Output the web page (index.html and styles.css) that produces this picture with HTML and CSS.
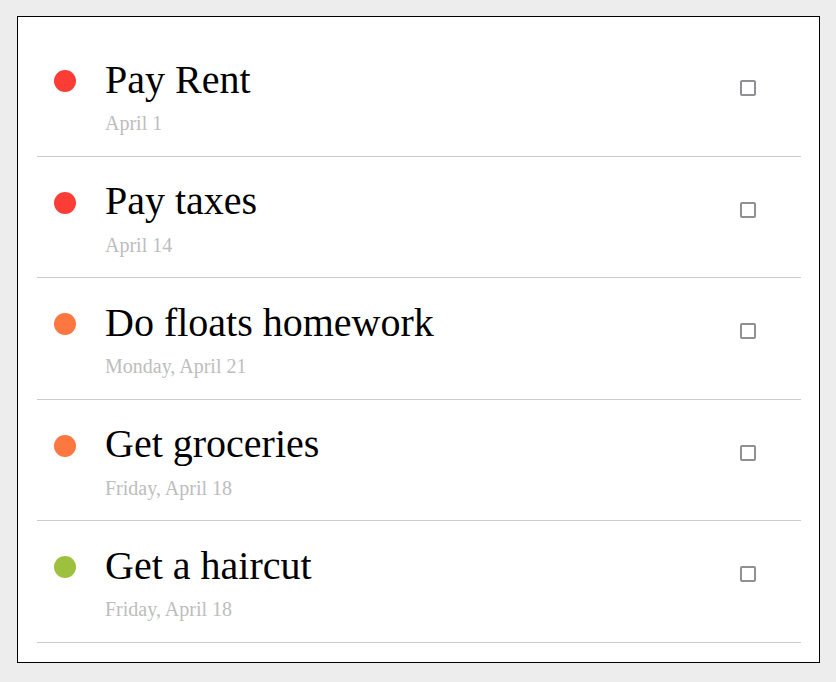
FILE: index.html
```html
<!DOCTYPE html>
<html>
<head>
<meta charset="utf-8">
<title>Todo</title>
<link rel="stylesheet" href="styles.css">
</head>
<body>
<div class="card">
  <ul class="list">
    <li class="item">
      <span class="dot dot-red"></span>
      <div class="text">
        <div class="title">Pay Rent</div>
        <div class="date">April 1</div>
      </div>
      <span class="check"></span>
    </li>
    <li class="item">
      <span class="dot dot-red"></span>
      <div class="text">
        <div class="title">Pay taxes</div>
        <div class="date">April 14</div>
      </div>
      <span class="check"></span>
    </li>
    <li class="item">
      <span class="dot dot-orange"></span>
      <div class="text">
        <div class="title">Do floats homework</div>
        <div class="date">Monday, April 21</div>
      </div>
      <span class="check"></span>
    </li>
    <li class="item">
      <span class="dot dot-orange"></span>
      <div class="text">
        <div class="title">Get groceries</div>
        <div class="date">Friday, April 18</div>
      </div>
      <span class="check"></span>
    </li>
    <li class="item">
      <span class="dot dot-green"></span>
      <div class="text">
        <div class="title">Get a haircut</div>
        <div class="date">Friday, April 18</div>
      </div>
      <span class="check"></span>
    </li>
  </ul>
</div>
</body>
</html>
```

FILE: styles.css
```css
html, body {
  margin: 0;
  padding: 0;
  background: #ededed;
  font-family: "Liberation Serif", "Times New Roman", serif;
}

body {
  padding: 16px 16px 0 17px;
}

.card {
  background: #fff;
  border: 1px solid #000;
  padding: 18px 18px 19px 19px;
}

.list {
  list-style: none;
  margin: 0;
  padding: 0;
}

.item {
  display: flex;
  align-items: flex-start;
  padding: 20.5px 0 20.5px 0;
  border-bottom: 1px solid #cccccc;
}

.dot {
  flex: none;
  width: 22px;
  height: 22px;
  border-radius: 50%;
  margin: 14.5px 29px 0 17px;
}

.dot-red { background: #fb3d36; }
.dot-orange { background: #fd7841; }
.dot-green { background: #9dc13f; }

.text {
  flex: 1;
}

.title {
  font-size: 40px;
  color: #000;
  margin-bottom: 9.5px;
}

.date {
  font-size: 20px;
  color: #bdbdbd;
}

.check {
  flex: none;
  box-sizing: border-box;
  width: 16px;
  height: 16px;
  border: 2px solid #8f8f94;
  border-radius: 2px;
  background: #fff;
  margin: 24.5px 45px 0 0;
}
```
